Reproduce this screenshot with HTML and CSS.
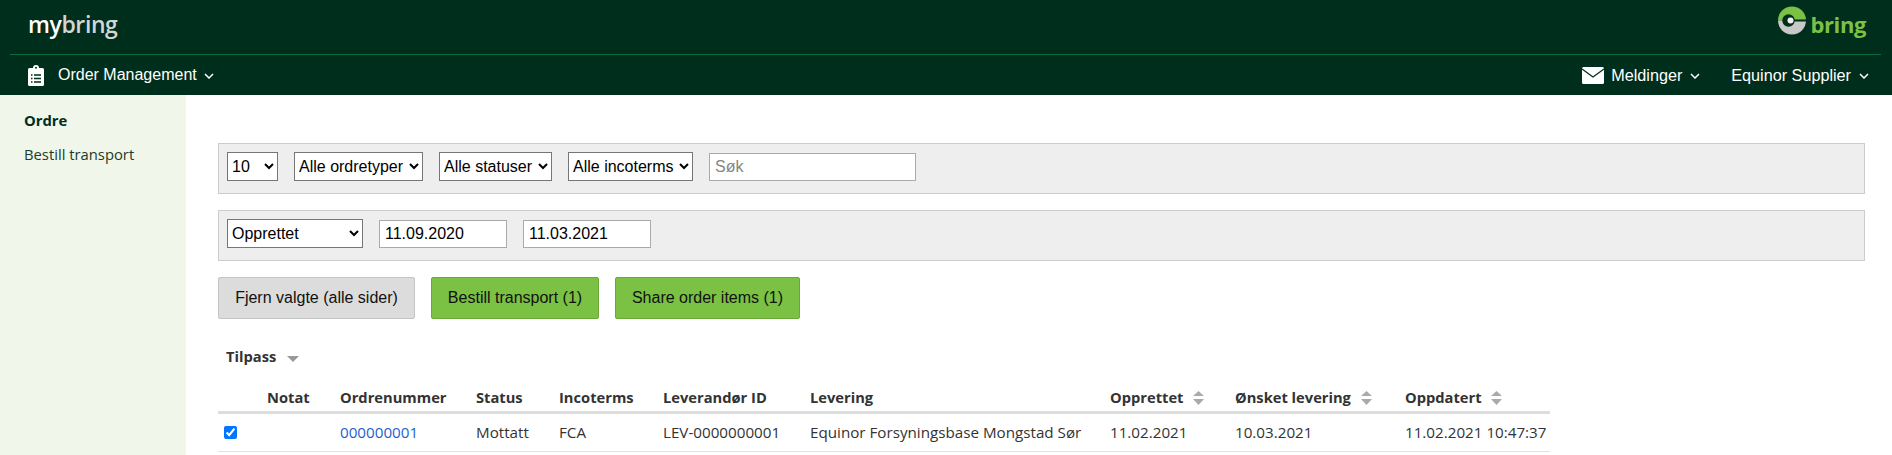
FILE: index.html
```html
<!DOCTYPE html>
<html>
<head>
    <meta charset="UTF-8">
    <link rel="stylesheet" href="styles.css">
</head>
<body>
    <header class="header">
        <div class="brand-row">
            <span class="logo">my<span class="logo-light">bring</span></span>
            <span class="bring-logo">
                <svg width="32" height="30" viewBox="0 0 32 30">
                    <path d="M0 14.500 A14 14 0 0 1 28 14.500 Z" fill="#7bc143"/>
                    <path d="M0 14.500 H28 A14 14 0 0 1 0 14.500 Z" fill="#c8c8c8"/>
                    <rect x="12" y="13.500" width="17" height="2" fill="#002e1c"/>
                    <circle cx="10.500" cy="14.500" r="6.200" fill="#002e1c"/>
                    <circle cx="12.500" cy="14.500" r="3" fill="#f2f2f2"/>
                </svg>
                <span class="bring-text">bring</span>
            </span>
        </div>
        <nav class="nav-row">
            <div class="nav-left">
                <svg class="clipboard" width="16" height="21" viewBox="0 0 16 21">
                    <path d="M1.500 3 H5 A3 3 0 0 1 11 3 H14.500 A1.500 1.500 0 0 1 16 4.500 V19.500 A1.500 1.500 0 0 1 14.500 21 H1.500 A1.500 1.500 0 0 1 0 19.500 V4.500 A1.500 1.500 0 0 1 1.500 3 Z" fill="#fff"/>
                    <circle cx="8" cy="2.700" r="1" fill="#002e1c"/>
                    <path d="M3 10 H4.500 M6 10 H13 M3 13.500 H4.500 M6 13.500 H13 M3 17 H4.500 M6 17 H13" stroke="#002e1c" stroke-width="1.500" fill="none"/>
                </svg>
                <span class="nav-item">Order Management <svg class="chev" width="10" height="6" viewBox="0 0 10 6"><path d="M1 1 L5 5 L9 1" stroke="#fff" stroke-width="1.500" fill="none"/></svg></span>
            </div>
            <div class="nav-right">
                <span class="nav-item">
                    <svg class="mail" width="22" height="17" viewBox="0 0 22 17">
                        <rect width="22" height="17" rx="1.500" fill="#fff"/>
                        <path d="M0 2 L11 10 L22 2" stroke="#002e1c" stroke-width="1.300" fill="none"/>
                    </svg>
                    Meldinger <svg class="chev" width="10" height="6" viewBox="0 0 10 6"><path d="M1 1 L5 5 L9 1" stroke="#fff" stroke-width="1.500" fill="none"/></svg>
                </span>
                <span class="nav-item">Equinor Supplier <svg class="chev" width="10" height="6" viewBox="0 0 10 6"><path d="M1 1 L5 5 L9 1" stroke="#fff" stroke-width="1.500" fill="none"/></svg></span>
            </div>
        </nav>
    </header>

    <div class="page">
        <aside class="sidebar">
            <a class="side-link active">Ordre</a>
            <a class="side-link">Bestill transport</a>
        </aside>

        <main class="content">
            <div class="filter-panel">
                <select class="select-size"><option>10</option></select>
                <select class="select-type"><option>Alle ordretyper</option></select>
                <select class="select-status"><option>Alle statuser</option></select>
                <select class="select-inco"><option>Alle incoterms</option></select>
                <input class="search" type="text" placeholder="Søk">
            </div>
            <div class="filter-panel">
                <select class="select-date"><option>Opprettet</option></select>
                <input class="date" type="text" value="11.09.2020">
                <input class="date" type="text" value="11.03.2021">
            </div>
            <div class="actions">
                <button class="btn btn-grey">Fjern valgte (alle sider)</button>
                <button class="btn btn-green btn-order">Bestill transport (1)</button>
                <button class="btn btn-green btn-share">Share order items (1)</button>
            </div>

            <div class="customize">Tilpass <span class="caret"></span></div>

            <table class="orders">
                <thead>
                    <tr>
                        <th class="col-check"></th>
                        <th class="col-note">Notat</th>
                        <th class="col-number">Ordrenummer</th>
                        <th class="col-status">Status</th>
                        <th class="col-inco">Incoterms</th>
                        <th class="col-supplier">Leverandør ID</th>
                        <th class="col-delivery">Levering</th>
                        <th class="col-created">Opprettet <svg class="sort" width="11" height="14" viewBox="0 0 11 14"><path d="M0 5 L5.500 0 L11 5 Z M0 8 H11 L5.500 14 Z" fill="#aaa"/></svg></th>
                        <th class="col-wanted">Ønsket levering <svg class="sort" width="11" height="14" viewBox="0 0 11 14"><path d="M0 5 L5.500 0 L11 5 Z M0 8 H11 L5.500 14 Z" fill="#aaa"/></svg></th>
                        <th>Oppdatert <svg class="sort" width="11" height="14" viewBox="0 0 11 14"><path d="M0 5 L5.500 0 L11 5 Z M0 8 H11 L5.500 14 Z" fill="#aaa"/></svg></th>
                    </tr>
                </thead>
                <tbody>
                    <tr>
                        <td><input class="row-check" type="checkbox" checked></td>
                        <td></td>
                        <td><a class="order-link">000000001</a></td>
                        <td>Mottatt</td>
                        <td>FCA</td>
                        <td>LEV-0000000001</td>
                        <td>Equinor Forsyningsbase Mongstad Sør</td>
                        <td>11.02.2021</td>
                        <td>10.03.2021</td>
                        <td>11.02.2021 10:47:37</td>
                    </tr>
                </tbody>
            </table>
        </main>
    </div>
</body>
</html>
```

FILE: styles.css
```css
* {
    box-sizing: border-box;
}

html, body {
    height: 100%;
    overflow: hidden;
}

body {
    margin: 0;
    font-family: "Open Sans", "Liberation Sans", sans-serif;
    font-size: 15px;
    color: #333;
    background: #fff;
    display: flex;
    flex-direction: column;
}

.header {
    height: 95px;
    background: #002e1c;
    padding: 0 11px 0 10px;
    color: #fff;
    flex-shrink: 0;
}

.brand-row {
    height: 55px;
    border-bottom: 1px solid #0b6a41;
    display: flex;
    justify-content: space-between;
    align-items: flex-start;
    padding: 0 15px 0 18px;
}

.logo {
    font-size: 23px;
    font-weight: 600;
    line-height: 48px;
    letter-spacing: -0.4px;
}

.logo-light {
    color: #d4d6d4;
}

.bring-logo {
    display: flex;
    align-items: flex-start;
    padding-top: 6px;
}

.bring-text {
    font-size: 22px;
    font-weight: 700;
    line-height: 37px;
    letter-spacing: -0.4px;
    color: #7bc143;
}

.nav-row {
    height: 40px;
    display: flex;
    justify-content: space-between;
    align-items: center;
    padding: 0 12px 0 18px;
    font-family: "Liberation Sans", sans-serif;
    font-size: 16px;
}

.nav-left, .nav-right, .nav-item {
    display: flex;
    align-items: center;
}

.nav-right {
    gap: 31px;
    font-size: 16.200px;
}

.clipboard {
    margin-right: 14px;
}

.chev {
    margin-left: 7px;
    margin-top: 2px;
}

.nav-right .chev {
    margin-left: 8px;
}

.mail {
    margin-right: 7px;
}

.page {
    flex: 1;
    display: flex;
    min-height: 0;
}

.sidebar {
    width: 186px;
    background: #f0f6e9;
    padding: 15px 0 0 24px;
    flex-shrink: 0;
}

.side-link {
    display: block;
    font-size: 14.800px;
    line-height: 20px;
    color: #1d3a2b;
    margin-bottom: 14px;
}

.side-link.active {
    font-weight: 700;
    color: #002e1c;
}

.content {
    flex: 1;
    padding: 48px 27px 0 32px;
}

.filter-panel {
    height: 51px;
    background: #eee;
    border: 1px solid #ccc;
    display: flex;
    align-items: flex-start;
    gap: 16px;
    padding: 8px 8px 0;
    margin-bottom: 16px;
}

select, input {
    font-family: "Liberation Sans", sans-serif;
    font-size: 16px;
    color: #000;
    background: #fff;
}

select {
    height: 29px;
    border: 1px solid #767676;
    border-radius: 0;
    padding: 0;
}

.select-size { width: 51px; }
.select-type { width: 129px; }
.select-status { width: 113px; }
.select-inco { width: 125px; }
.select-date { width: 136px; }

.search, .date {
    height: 28px;
    margin-top: 1px;
    border: 1px solid #aaa;
    padding: 0 5px;
}

.search { width: 207px; }
.date { width: 128px; }

.search::placeholder {
    color: #858585;
}

.actions {
    display: flex;
    gap: 16px;
}

.btn {
    height: 42px;
    padding: 0;
    font-family: "Liberation Sans", sans-serif;
    font-size: 16px;
    color: #111;
    border-radius: 2px;
}

.btn-grey {
    width: 197px;
    background: #dcdcdc;
    border: 1px solid #c4c4c4;
}

.btn-green {
    background: #7bc143;
    border: 1px solid #6aa838;
}

.btn-order { width: 168px; }
.btn-share { width: 185px; }

.customize {
    font-weight: 700;
    font-size: 14.700px;
    margin: 27px 0 0 8px;
    line-height: 20px;
    height: 41px;
}

.caret {
    display: inline-block;
    margin-left: 7px;
    vertical-align: 0;
    border-left: 6px solid transparent;
    border-right: 6px solid transparent;
    border-top: 6px solid #999;
}

.orders {
    width: 1332px;
    border-collapse: collapse;
    table-layout: fixed;
}

.orders th {
    text-align: left;
    font-size: 14.700px;
    font-weight: 700;
    height: 25px;
    padding: 0;
    border-bottom: 3px solid #ddd;
    white-space: nowrap;
    line-height: 20px;
    vertical-align: top;
}

.orders td {
    height: 39px;
    padding: 0;
    font-size: 15.200px;
    border-bottom: 1px solid #e3e3e3;
    white-space: nowrap;
}

.col-check { width: 49px; }
.col-note { width: 73px; }
.col-number { width: 136px; }
.col-status { width: 83px; }
.col-inco { width: 104px; }
.col-supplier { width: 147px; }
.col-delivery { width: 300px; }
.col-created { width: 125px; }
.col-wanted { width: 170px; }

.sort {
    margin-left: 6px;
    vertical-align: -2px;
}

.row-check {
    width: 13px;
    height: 13px;
    margin: 0 0 0 6px;
    accent-color: #0075ff;
    vertical-align: -1px;
}

.order-link {
    color: #1d5fcf;
}
```
